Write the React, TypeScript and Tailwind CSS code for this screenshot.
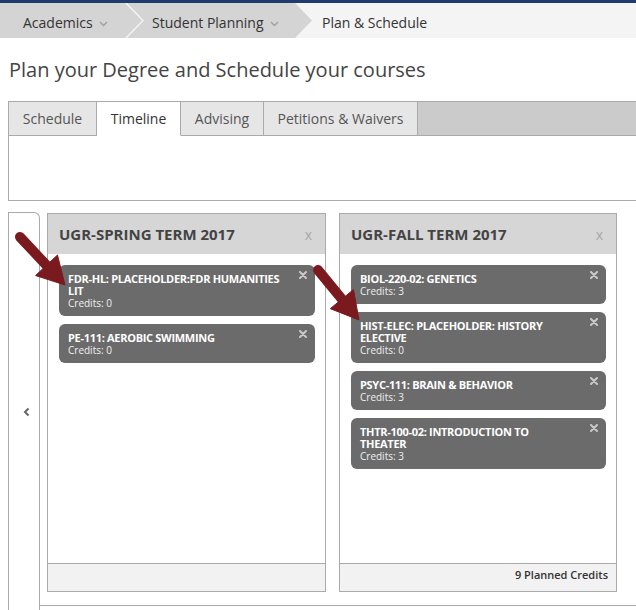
import React from "react";

type Course = { lines: string[]; credits: string };

const spring: Course[] = [
  { lines: ["FDR-HL: PLACEHOLDER:FDR HUMANITIES", "LIT"], credits: "Credits: 0" },
  { lines: ["PE-111: AEROBIC SWIMMING"], credits: "Credits: 0" },
];

const fall: Course[] = [
  { lines: ["BIOL-220-02: GENETICS"], credits: "Credits: 3" },
  { lines: ["HIST-ELEC: PLACEHOLDER: HISTORY", "ELECTIVE"], credits: "Credits: 0" },
  { lines: ["PSYC-111: BRAIN & BEHAVIOR"], credits: "Credits: 3" },
  { lines: ["THTR-100-02: INTRODUCTION TO", "THEATER"], credits: "Credits: 3" },
];

function DownChevron() {
  return (
    <svg width="9" height="6" viewBox="0 0 9 6" className="ml-[6px] mt-[3px]">
      <path d="M1 1 L4.5 4.5 L8 1" fill="none" stroke="#a0a0a0" strokeWidth="1.4" />
    </svg>
  );
}

function CardClose() {
  return (
    <svg width="8" height="8" viewBox="0 0 8 8" className="absolute top-[6px] right-[8px]">
      <path d="M1 1 L7 7 M7 1 L1 7" stroke="#c9c9c9" strokeWidth="2" strokeLinecap="round" />
    </svg>
  );
}

function CourseCard({ c }: { c: Course }) {
  return (
    <div className="relative rounded-[6px] bg-[#6b6b6b] pl-[9px] pr-[22px] pt-[8px] pb-[7px]">
      <CardClose />
      {c.lines.map((l) => (
        <div key={l} className="whitespace-nowrap text-[11px] leading-[12px] font-bold text-white tracking-[-0.3px]">
          {l}
        </div>
      ))}
      <div className="text-[10px] leading-[12px] text-[#f0f0f0]">{c.credits}</div>
    </div>
  );
}

function Term({ title, courses, footer, width }: { title: string; courses: Course[]; footer: string; width: string }) {
  return (
    <div className={`${width} h-[379px] flex flex-col border border-[#aaaaaa] bg-white`}>
      <div className="h-[40px] shrink-0 bg-[#d6d6d6] flex items-center justify-between pl-[11px] pr-[13px]">
        <span className="text-[15px] font-bold text-[#444444]">{title}</span>
        <span className="text-[14px] text-[#a8a8a8]">x</span>
      </div>
      <div className="flex-1 flex flex-col gap-[8px] pl-[11px] pr-[10px] pt-[11px]">
        {courses.map((c) => (
          <CourseCard key={c.lines[0]} c={c} />
        ))}
      </div>
      <div className="h-[28px] shrink-0 border-t border-[#aaaaaa] bg-[#f2f2f2] flex items-center justify-end pr-[8px] pb-[5px]">
        <span className="text-[11px] font-semibold text-[#333333]">{footer}</span>
      </div>
    </div>
  );
}

function Arrow({ s, t }: { s: [number, number]; t: [number, number] }) {
  const dx = t[0] - s[0];
  const dy = t[1] - s[1];
  const len = Math.sqrt(dx * dx + dy * dy);
  const ux = dx / len;
  const uy = dy / len;
  const nx = -uy;
  const ny = ux;
  const hl = 27;
  const hw = 15;
  const bx = t[0] - hl * ux;
  const by = t[1] - hl * uy;
  const pts = `${t[0]},${t[1]} ${bx + hw * nx},${by + hw * ny} ${bx - hw * nx},${by - hw * ny}`;
  return (
    <g>
      <line x1={s[0]} y1={s[1]} x2={bx + 2 * ux} y2={by + 2 * uy} stroke="#7a1a1e" strokeWidth="10" strokeLinecap="round" />
      <polygon points={pts} fill="#7a1a1e" strokeLinejoin="round" stroke="#7a1a1e" strokeWidth="1" />
    </g>
  );
}

export default function App() {
  return (
    <div className="relative w-[636px] h-[610px] overflow-hidden bg-white font-['Open_Sans',sans-serif] text-[#333333]">
      <div className="h-[3px] bg-[#213a70]" />
      <nav className="h-[35px] bg-[#f4f4f4] flex text-[14px] text-[#333333]">
        <div className="w-[142px] h-full bg-[#d4d4d4] flex items-center pl-[23px] pt-[3px] [clip-path:polygon(0_0,125px_0,142px_50%,125px_100%,0_100%)]">
          <span>Academics</span>
          <DownChevron />
        </div>
        <div className="-ml-[15px] w-[185px] h-full bg-[#d4d4d4] flex items-center pl-[25px] pt-[3px] [clip-path:polygon(0_0,168px_0,185px_50%,168px_100%,0_100%,17px_50%)]">
          <span>Student Planning</span>
          <DownChevron />
        </div>
        <div className="flex items-center pl-[10px] pt-[3px]">Plan &amp; Schedule</div>
      </nav>

      <h1 className="mt-[18px] pl-[9px] text-[20px] leading-[28px] text-[#444444]">
        Plan your Degree and Schedule your courses
      </h1>

      <div className="mt-[17px] ml-[8px] w-[640px] border border-[#aaaaaa]">
        <div className="h-[34px] flex text-[14px] bg-[#cbcbcb]">
          <div className="w-[88px] h-full flex items-center justify-center bg-[#e6e6e6] border-r border-b border-[#aaaaaa] text-[#555555]">Schedule</div>
          <div className="w-[84px] h-full flex items-center justify-center bg-white border-r border-b border-[#aaaaaa] border-b-white text-[#333333]">Timeline</div>
          <div className="w-[83px] h-full flex items-center justify-center bg-[#e6e6e6] border-r border-b border-[#aaaaaa] text-[#555555]">Advising</div>
          <div className="w-[154px] h-full flex items-center justify-center bg-[#e6e6e6] border-r border-b border-[#aaaaaa] text-[#555555]">Petitions &amp; Waivers</div>
          <div className="flex-1 h-full border-b border-[#aaaaaa]" />
        </div>
        <div className="h-[64px] bg-white" />
      </div>

      <div className="mt-[11px] ml-[8px] flex">
        <div className="w-[32px] h-[398px] border-l border-t border-r border-[#aaaaaa] rounded-tr-[6px] flex items-center justify-center pl-[5px]">
          <svg width="7" height="10" viewBox="0 0 7 10">
            <path d="M5.5 1.5 L2 5 L5.5 8.5" fill="none" stroke="#666666" strokeWidth="2" />
          </svg>
        </div>
        <div className="flex-1 h-[394px] border-b border-[#aaaaaa] pl-[7px] pt-[1px] flex gap-[13px]">
          <Term title="UGR-SPRING TERM 2017" courses={spring} footer="" width="w-[279px]" />
          <Term title="UGR-FALL TERM 2017" courses={fall} footer="9 Planned Credits" width="w-[278px]" />
        </div>
      </div>

      <svg className="absolute left-0 top-0 pointer-events-none" width="636" height="610">
        <Arrow s={[20, 237]} t={[65, 285]} />
        <Arrow s={[318, 270]} t={[359, 320]} />
      </svg>
    </div>
  );
}
